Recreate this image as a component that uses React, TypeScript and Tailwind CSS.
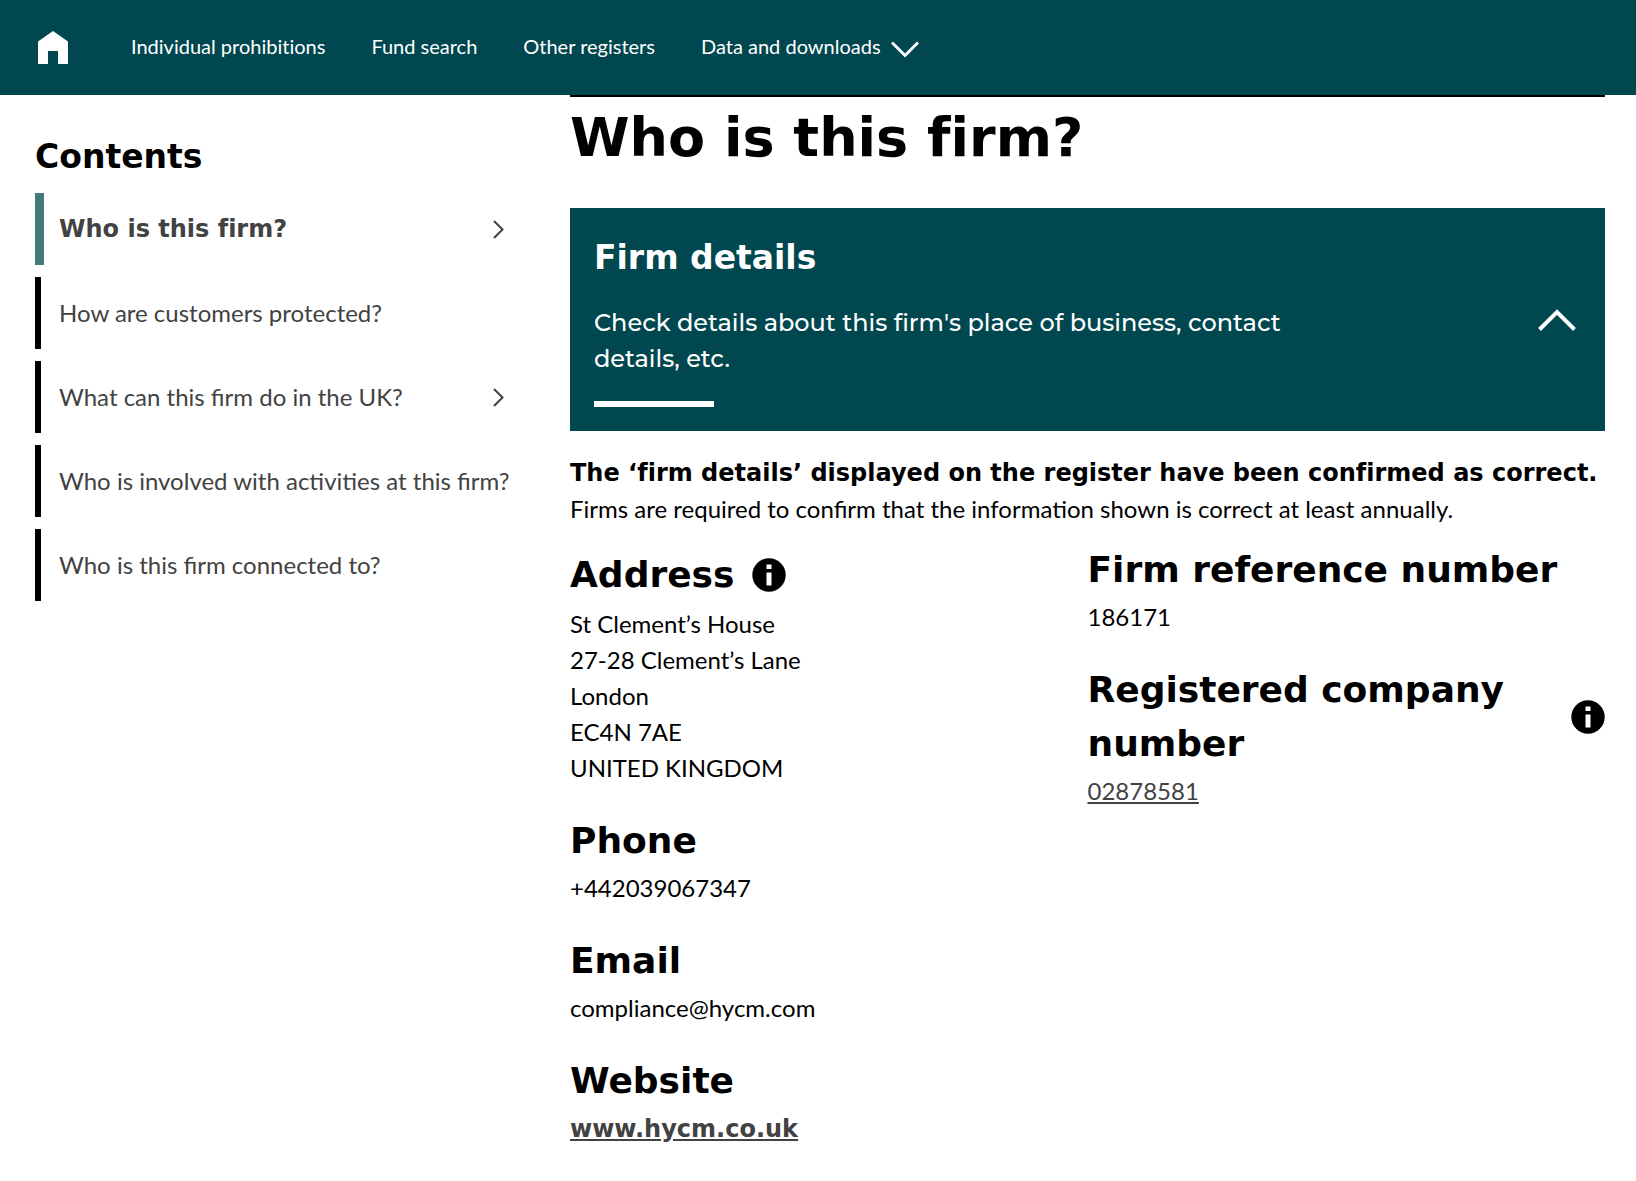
import type { ReactNode } from "react";

const heading = "font-['Verdana','DejaVu_Sans',sans-serif] font-bold [font-variant-ligatures:none]";

function HomeIcon() {
  return (
    <svg viewBox="0 0 30 33" className="h-[33px] w-[30px]" fill="currentColor" aria-hidden="true">
      <path d="M15 0 30 10.5V33H20V20H10V33H0V10.5Z" />
    </svg>
  );
}

function InfoButton({ label }: { label: string }) {
  return (
    <button type="button" aria-label={label} className="shrink-0 cursor-pointer">
      <svg viewBox="0 0 34 34" className="size-[34px]" aria-hidden="true">
        <circle cx="17" cy="17" r="16.7" fill="#000" />
        <path d="M14.5 6.5h5v4.5h-5zM14.5 14.5h5v13h-5z" fill="#fff" />
      </svg>
    </button>
  );
}

const navItems = ["Individual prohibitions", "Fund search", "Other registers"];

function TopNav() {
  return (
    <header className="flex min-h-[95px] items-center bg-[#00474f] pl-[38px] text-white">
      <a href="#home" aria-label="Home" className="shrink-0">
        <HomeIcon />
      </a>
      <nav className="ml-[63px] flex flex-wrap items-center gap-x-[46px] pb-1 text-[20px] leading-[30px] [font-variant-ligatures:none]">
        {navItems.map((item) => (
          <a key={item} href="#registers">
            {item}
          </a>
        ))}
        <button type="button" className="flex cursor-pointer items-center gap-[10px]">
          Data and downloads
          <svg viewBox="0 0 28 17" className="mt-2 h-[17px] w-7" fill="none" stroke="currentColor" strokeWidth="3" aria-hidden="true">
            <path d="M1 1.5 14 14.5 27 1.5" />
          </svg>
        </button>
      </nav>
    </header>
  );
}

const contents = [
  { label: "Who is this firm?", active: true, expandable: true },
  { label: "How are customers protected?" },
  { label: "What can this firm do in the UK?", expandable: true },
  { label: "Who is involved with activities at this firm?" },
  { label: "Who is this firm connected to?" },
];

function Contents() {
  return (
    <aside className="w-[469px] shrink-0 pt-9">
      <h2 className={`${heading} text-[33px] leading-[52px]`}>Contents</h2>
      <ul className="mt-[10px] flex flex-col gap-3">
        {contents.map((item) => (
          <li key={item.label}>
            <a
              href="#section"
              aria-current={item.active ? "true" : undefined}
              className={`flex min-h-[72px] items-center justify-between whitespace-nowrap text-[#424242] ${
                item.active
                  ? `${heading} border-l-9 border-[#417b7e] pl-[15px]`
                  : "border-l-6 border-black pl-[18px]"
              }`}
            >
              {item.label}
              {item.expandable && (
                <svg viewBox="0 0 11 19" className="h-[19px] w-[11px]" fill="none" stroke="#424242" strokeWidth="2" aria-hidden="true">
                  <path d="M1 1 9.5 9.5 1 18" />
                </svg>
              )}
            </a>
          </li>
        ))}
      </ul>
    </aside>
  );
}

function FirmDetailsBanner() {
  return (
    <button
      type="button"
      aria-expanded="true"
      className="mt-[29px] flex w-full cursor-pointer items-center justify-between bg-[#00474f] p-6 text-left text-white"
    >
      <span className="block max-w-[720px]">
        <span className={`${heading} block text-[33px] leading-[52px]`}>Firm details</span>
        <span className="mt-[21px] block font-['Montserrat','Inter',sans-serif] text-[24px] leading-9 font-medium">
          Check details about this firm's place of business, contact details, etc.
        </span>
        <span className="mt-6 block h-1.5 w-[120px] bg-white" />
      </span>
      <svg viewBox="0 0 38 22" className="mr-[5px] h-[22px] w-[38px] shrink-0" fill="none" stroke="currentColor" strokeWidth="4" aria-hidden="true">
        <path d="M1.5 20.5 19 3 36.5 20.5" />
      </svg>
    </button>
  );
}

function Field({ title, info, children }: { title: string; info?: ReactNode; children: ReactNode }) {
  return (
    <section>
      <div className="mb-0.5 flex items-center justify-between">
        <h3 className={`${heading} text-[36px] leading-[54px]`}>{title}</h3>
        {info}
      </div>
      {children}
    </section>
  );
}

export default function App() {
  return (
    <div className="min-h-screen bg-white font-['Lato',sans-serif] text-[24px] leading-9 text-black">
      <TopNav />
      <div className="flex gap-[66px] pr-[31px] pl-[35px]">
        <Contents />
        <main className="min-w-0 grow border-t-2 border-black">
          <h1 className={`${heading} text-[54px] leading-[82px]`}>Who is this firm?</h1>
          <FirmDetailsBanner />
          <p className="mt-[23px]">
            <strong className={heading}>
              The ‘firm details’ displayed on the register have been confirmed as correct.
            </strong>
            <br />
            Firms are required to confirm that the information shown is correct at least annually.
          </p>
          <div className="mt-4 grid grid-cols-2 items-start">
            <div className="flex flex-col gap-7">
              <section>
                <div className="flex min-h-[63px] items-center gap-[18px]">
                  <h3 className={`${heading} text-[36px] leading-[54px]`}>Address</h3>
                  <InfoButton label="About the address" />
                </div>
                <address className="not-italic">
                  St Clement’s House
                  <br />
                  27-28 Clement’s Lane
                  <br />
                  London
                  <br />
                  EC4N 7AE
                  <br />
                  UNITED KINGDOM
                </address>
              </section>
              <Field title="Phone">
                <p>+442039067347</p>
              </Field>
              <Field title="Email">
                <p>compliance@hycm.com</p>
              </Field>
              <Field title="Website">
                <a href="#website" className={`${heading} text-[#424242] underline`}>
                  www.hycm.co.uk
                </a>
              </Field>
            </div>
            <div className="flex flex-col gap-7">
              <Field title="Firm reference number">
                <p>186171</p>
              </Field>
              <Field
                title="Registered company number"
                info={<InfoButton label="About the registered company number" />}
              >
                <a href="#company" className="text-[#424242] underline">
                  02878581
                </a>
              </Field>
            </div>
          </div>
        </main>
      </div>
    </div>
  );
}
